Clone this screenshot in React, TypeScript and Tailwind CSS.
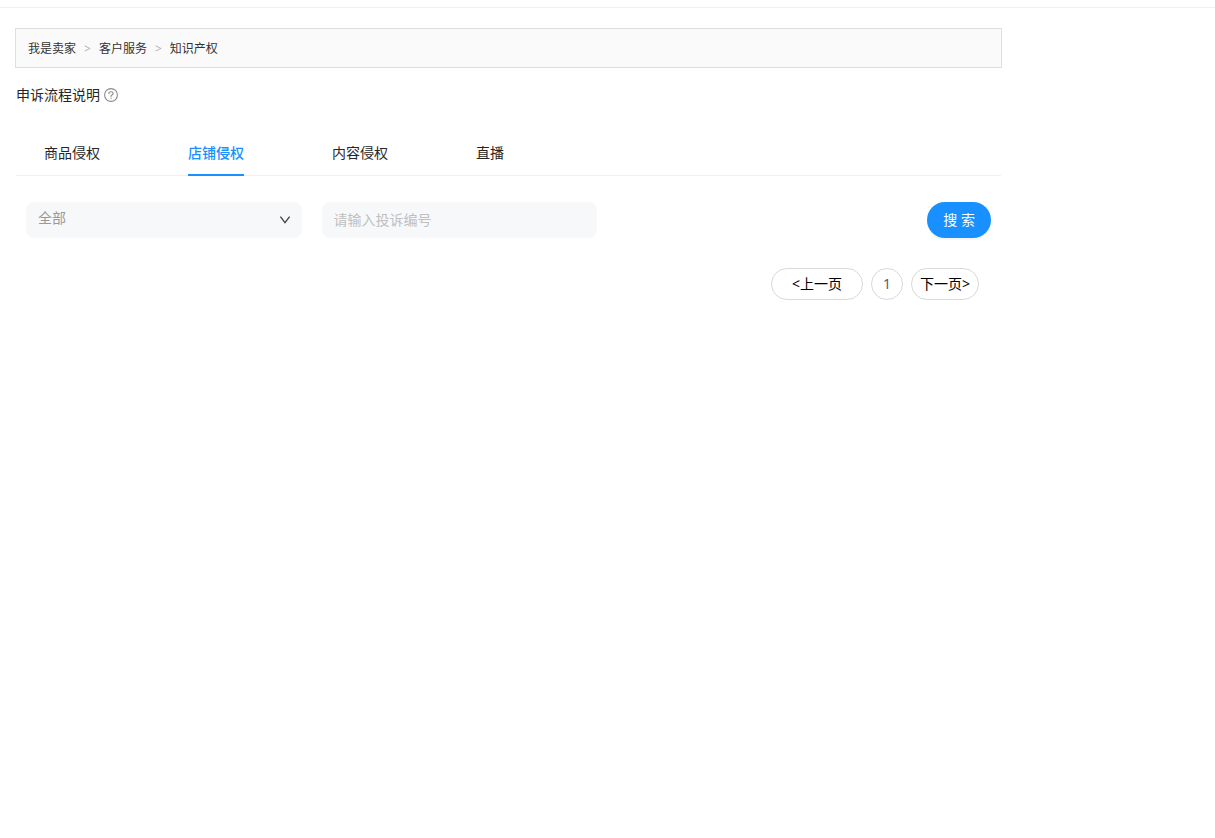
import { useState } from "react";

const crumbs = ["我是卖家", "客户服务", "知识产权"];
const tabs = ["商品侵权", "店铺侵权", "内容侵权", "直播"];

function Breadcrumb() {
  return (
    <nav
      aria-label="面包屑"
      className="flex h-10 items-center border border-[#dedede] bg-[#fafafa] px-3 pt-px text-xs text-[#333]"
    >
      {crumbs.map((crumb, i) => (
        <span key={crumb} className="flex items-center">
          {i > 0 && <span className="px-2 text-[#b3b3b3]">&gt;</span>}
          <a href="#">{crumb}</a>
        </span>
      ))}
    </nav>
  );
}

function HelpIcon() {
  return (
    <svg
      viewBox="0 0 14 14"
      className="size-3.5"
      fill="none"
      stroke="#8c8c8c"
      strokeWidth="1.1"
      strokeLinecap="round"
      aria-hidden="true"
    >
      <circle cx="7" cy="7" r="6.4" />
      <path d="M4.900 5.500c0-1 .9-1.800 2.100-1.800s2.100.8 2.100 1.800c0 .8-.6 1.300-1.200 1.600-.6.3-.9.600-.9 1.200v.2" />
      <circle cx="7" cy="10.200" r=".65" fill="#8c8c8c" stroke="none" />
    </svg>
  );
}

function Tabs() {
  const [active, setActive] = useState("店铺侵权");
  return (
    <div role="tablist" className="mx-px flex gap-22 border-b border-[#f0f0f0] px-7">
      {tabs.map((tab) => (
        <button
          key={tab}
          type="button"
          role="tab"
          aria-selected={tab === active}
          onClick={() => setActive(tab)}
          className={
            tab === active
              ? "-mb-px h-11 cursor-pointer border-b-2 border-[#1890ff] font-medium text-[#1890ff]"
              : "-mb-px h-11 cursor-pointer border-b-2 border-transparent text-[#262626]"
          }
        >
          {tab}
        </button>
      ))}
    </div>
  );
}

function Filters() {
  return (
    <form className="mx-px mt-[26px] flex" onSubmit={(e) => e.preventDefault()}>
      <div className="relative w-[30%] px-2.5">
        <select
          aria-label="投诉状态"
          className="h-9 w-full appearance-none rounded-lg bg-[#f7f8fa] px-3 pb-1 text-[#999] outline-none"
        >
          <option>全部</option>
        </select>
        <svg
          viewBox="0 0 12 12"
          className="pointer-events-none absolute top-3 right-[21px] size-3"
          fill="none"
          stroke="#404040"
          strokeWidth="1.3"
          aria-hidden="true"
        >
          <path d="M1.4 2.6 6 8.600l4.600-6" />
        </svg>
      </div>
      <div className="w-[30%] px-2.5">
        <input
          type="text"
          aria-label="投诉编号"
          placeholder="请输入投诉编号"
          className="h-9 w-full rounded-lg bg-[#f7f8fa] px-3 pb-0.5 outline-none placeholder:text-[#bfbfbf]"
        />
      </div>
      <div className="ml-auto px-2.5">
        <button
          type="submit"
          className="h-9 cursor-pointer rounded-full bg-[#1890ff] px-4 text-white shadow-[0_2px_0_rgba(0,0,0,0.04)]"
        >
          搜 索
        </button>
      </div>
    </form>
  );
}

function Pagination() {
  return (
    <nav aria-label="分页" className="mt-[30px] mr-[23px] flex justify-end gap-2 text-black">
      <button type="button" className="h-8 cursor-pointer rounded-full border border-[#d9d9d9] px-5">
        &lt;上一页
      </button>
      <button
        type="button"
        aria-current="page"
        className="size-8 cursor-pointer rounded-full border border-[#d9d9d9] text-[#595959]"
      >
        1
      </button>
      <button type="button" className="h-8 cursor-pointer rounded-full border border-[#d9d9d9] px-2">
        下一页&gt;
      </button>
    </nav>
  );
}

export default function App() {
  return (
    <div className="min-h-screen bg-white font-['Noto_Sans','Noto_Sans_CJK_SC',sans-serif] text-sm text-[#262626]">
      <header className="h-2 border-b border-[#f0f0f0]" />
      <main className="mt-5 ml-[15px] max-w-[987px]">
        <Breadcrumb />
        <div className="mt-[17px] flex items-center gap-1 pl-px">
          <span>申诉流程说明</span>
          <button type="button" aria-label="查看申诉流程说明" className="cursor-pointer">
            <HelpIcon />
          </button>
        </div>
        <div className="mt-[27px]">
          <Tabs />
        </div>
        <Filters />
        <Pagination />
      </main>
    </div>
  );
}
